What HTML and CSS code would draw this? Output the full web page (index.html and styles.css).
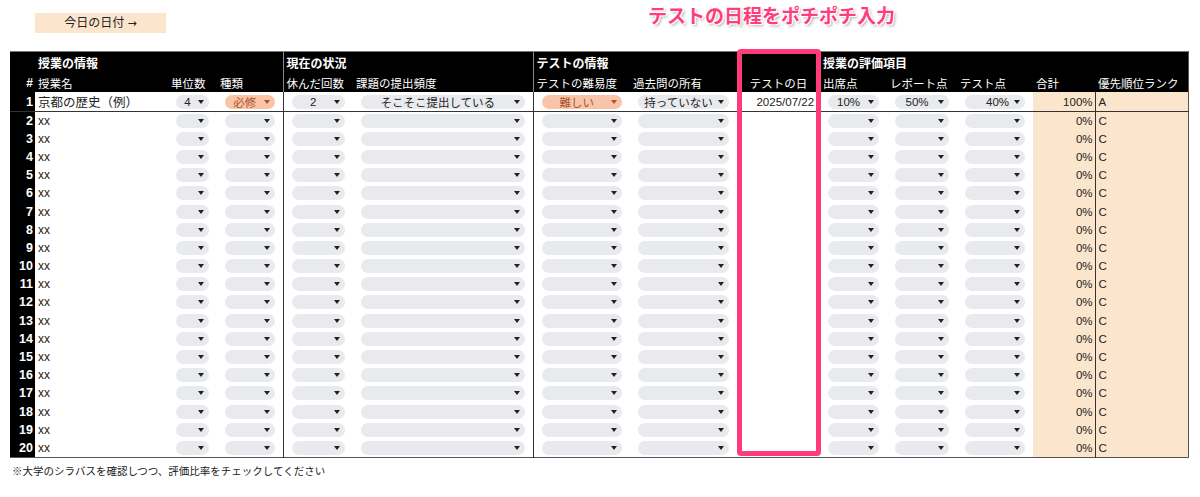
FILE: index.html
```html
<!DOCTYPE html>
<html lang="ja">
<head>
    <meta charset="UTF-8">
    <meta name="viewport" content="width=device-width, initial-scale=1.0">
    <title>授業の優先順位シート</title>
    <link rel="stylesheet" href="styles.css">
</head>
<body>
    <div class="page">
        <div class="top">
            <div class="today-btn">今日の日付 <span class="arrow">→</span></div>
            <div class="catch">テストの日程をポチポチ入力</div>
        </div>

        <div class="sheet-wrap">
            <table class="sheet">
                <colgroup>
                    <col style="width:25px">
                    <col style="width:133px">
                    <col style="width:49px">
                    <col style="width:66px">
                    <col style="width:70px">
                    <col style="width:180px">
                    <col style="width:97px">
                    <col style="width:107px">
                    <col style="width:83px">
                    <col style="width:67px">
                    <col style="width:70px">
                    <col style="width:76px">
                    <col style="width:62px">
                    <col style="width:93px">
                </colgroup>
                <thead>
                    <tr class="sec-row">
                        <th></th>
                        <th colspan="3">授業の情報</th>
                        <th colspan="2" class="sec">現在の状況</th>
                        <th colspan="2" class="sec">テストの情報</th>
                        <th></th>
                        <th colspan="5">授業の評価項目</th>
                    </tr>
                    <tr class="col-row">
                        <th class="num">#</th>
                        <th>授業名</th>
                        <th>単位数</th>
                        <th>種類</th>
                        <th class="sec">休んだ回数</th>
                        <th>課題の提出頻度</th>
                        <th class="sec">テストの難易度</th>
                        <th>過去問の所有</th>
                        <th class="center">テストの日</th>
                        <th>出席点</th>
                        <th>レポート点</th>
                        <th>テスト点</th>
                        <th>合計</th>
                        <th>優先順位ランク</th>
                    </tr>
                </thead>
                <tbody>
                    <tr class="first">
                        <td class="num">1</td>
                        <td class="name">京都の歴史（例）</td>
                        <td class="dd"><span class="chip"><span class="v">4</span></span></td>
                        <td class="dd"><span class="chip warm"><span class="v">必修</span></span></td>
                        <td class="dd sec"><span class="chip"><span class="v">2</span></span></td>
                        <td class="dd"><span class="chip"><span class="v">そこそこ提出している</span></span></td>
                        <td class="dd sec"><span class="chip warm"><span class="v">難しい</span></span></td>
                        <td class="dd"><span class="chip"><span class="v">持っていない</span></span></td>
                        <td class="date">2025/07/22</td>
                        <td class="dd"><span class="chip"><span class="v">10%</span></span></td>
                        <td class="dd"><span class="chip"><span class="v">50%</span></span></td>
                        <td class="dd"><span class="chip right"><span class="v">40%</span></span></td>
                        <td class="total">100%</td>
                        <td class="rank">A</td>
                    </tr>
                    <script>
                        for (let i = 2; i <= 20; i++) {
                            document.write(`<tr>
                                <td class="num">${i}</td>
                                <td class="name xx">xx</td>
                                <td class="dd"><span class="chip"><span class="v"></span></span></td>
                                <td class="dd"><span class="chip"><span class="v"></span></span></td>
                                <td class="dd sec"><span class="chip"><span class="v"></span></span></td>
                                <td class="dd"><span class="chip"><span class="v"></span></span></td>
                                <td class="dd sec"><span class="chip"><span class="v"></span></span></td>
                                <td class="dd"><span class="chip"><span class="v"></span></span></td>
                                <td class="date"></td>
                                <td class="dd"><span class="chip"><span class="v"></span></span></td>
                                <td class="dd"><span class="chip"><span class="v"></span></span></td>
                                <td class="dd"><span class="chip"><span class="v"></span></span></td>
                                <td class="total">0%</td>
                                <td class="rank">C</td>
                            </tr>`);
                        }
                    </script>
                </tbody>
            </table>
            <div class="pick-box"></div>
        </div>

        <p class="note">※大学のシラバスを確認しつつ、評価比率をチェックしてください</p>
    </div>
</body>
</html>
```

FILE: styles.css
```css
body{margin:0;background:#fff;color:#222;font-family:"Liberation Sans","Noto Sans CJK JP",sans-serif}
.page{padding:0 10px}

/* top bar */
.top{display:flex;align-items:flex-start;height:51px}
.today-btn{margin:13px 0 0 25px;width:131px;height:20px;line-height:20px;text-align:center;font-size:12px;background:#fce5cd;color:#222}
.today-btn .arrow{font-family:"DejaVu Sans",sans-serif;font-size:11px}
.catch{
    margin:4px 0 0 482px;
    font-size:19px;
    line-height:26px;
    font-weight:700;
    color:#ff3d7c;
    white-space:nowrap;
    text-shadow:1px 1px 0 #fff,-1px -1px 0 #fff,1px -1px 0 #fff,-1px 1px 0 #fff,0 0 2px #fff,2px 2px 3px rgba(0,0,0,.35);
}

/* sheet */
.sheet-wrap{position:relative;width:1178px}
.sheet{width:1178px;table-layout:fixed;border-collapse:collapse;border-top:1px solid #777;border-bottom:1px solid #555;border-right:1px solid #555}
.sheet th,.sheet td{padding:0;white-space:nowrap;overflow:hidden;vertical-align:middle}

.sheet thead th{background:#000;color:#fff;text-align:left;padding-left:3px}
.sec-row th{height:21px;font-size:12px;font-weight:700}
.col-row th{height:19px;font-size:11.5px;font-weight:400}
.sheet thead th.sec{border-left:1px solid #888}
.sheet thead th.num{font-weight:700;text-align:right;padding:0 2px 0 0;font-size:12px}
.sheet thead th.center{text-align:center;padding-left:0}

.sheet tbody tr{height:18.2px}
.sheet tbody tr.first{height:19px}
.sheet tbody tr.first td{border-bottom:1px solid #333}
.sheet td.sec{border-left:1px solid #333}

.sheet td.num{background:#000;color:#fff;font-weight:700;font-size:12.5px;text-align:right;padding-right:2px}
.sheet td.name{font-size:12.5px;padding-left:3px}
.sheet td.xx{font-size:12px}
.sheet td.dd{padding:0 8px}
.sheet td.date{font-size:11.5px;text-align:right;padding-right:6px}
.sheet td.total{background:#fce5cd;text-align:right;padding-right:2px;font-size:11.5px}
.sheet td.rank{background:#fce5cd;border-left:1px solid #333;padding-left:3px;font-size:11.5px}

/* dropdown chips */
.chip{display:flex;align-items:center;height:14px;border-radius:7px;background:#e8eaed;padding:0 5px 0 6px;font-size:11.5px;color:#222}
.chip .v{flex:1;text-align:center;overflow:hidden}
.chip.right .v{text-align:right}
.chip::after{content:"";flex:none;margin-left:5px;border-left:3.5px solid transparent;border-right:3.5px solid transparent;border-top:4px solid #222}
.chip.warm{background:#f9c4a7;color:#a9532f}
.chip.warm::after{border-top-color:#a9532f}

/* highlight box */
.pick-box{position:absolute;left:727px;top:-2px;width:84px;height:407px;box-sizing:border-box;border:5px solid #ff3b79;border-radius:4px}

.note{margin:6px 0 0 2px;font-size:10.5px;line-height:14px;color:#222}
```
